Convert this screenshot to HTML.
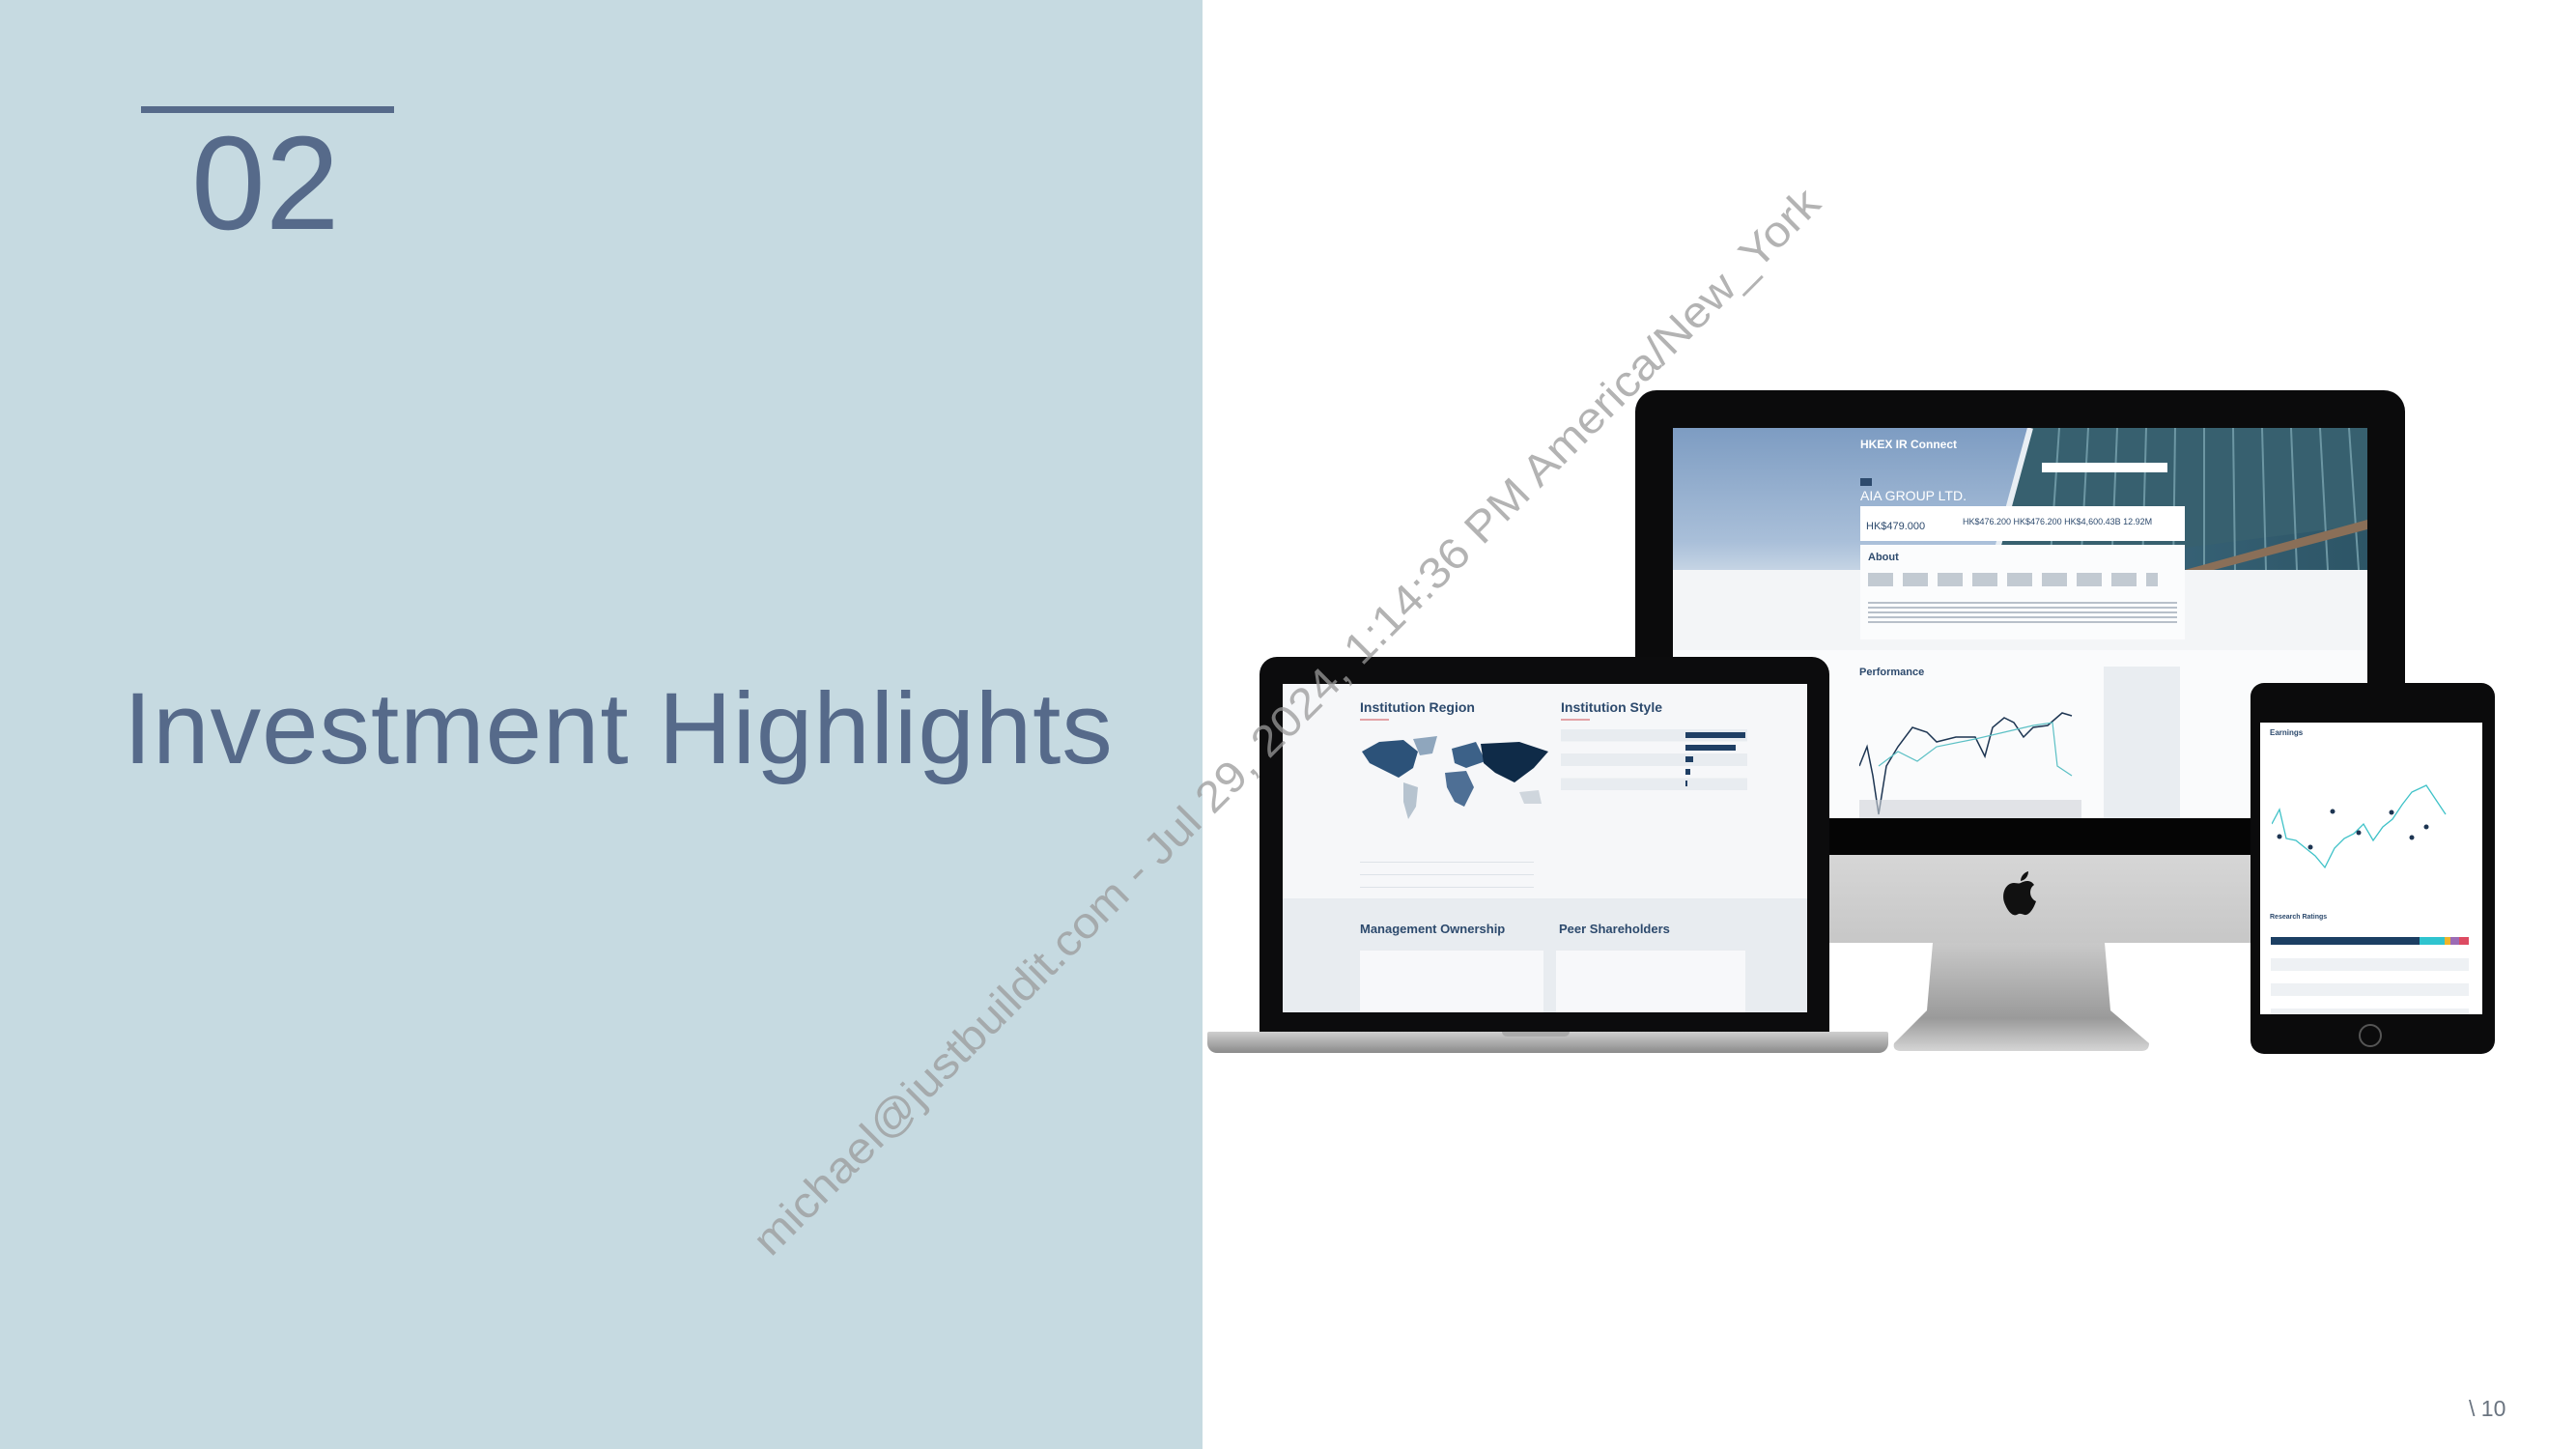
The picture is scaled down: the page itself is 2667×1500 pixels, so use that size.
<!DOCTYPE html>
<html><head><meta charset="utf-8"><style>
*{margin:0;padding:0;box-sizing:border-box}
body{width:2667px;height:1500px;position:relative;background:#fff;overflow:hidden;font-family:"Liberation Sans",sans-serif}
.a{position:absolute}
.t{font-family:"Liberation Sans",sans-serif;color:#2d4a6d;font-weight:bold;white-space:nowrap}
</style></head><body>
<div class="a" style="left:0;top:0;width:1245px;height:1500px;background:#c6dae1"></div>
<div class="a" style="left:146px;top:110px;width:262px;height:7px;background:#566a8a"></div>
<div class="a" style="left:198px;top:120px;font-size:138px;line-height:140px;color:#566a8a">02</div>
<div class="a" style="left:128px;top:690px;font-size:105px;line-height:130px;color:#566a8a;letter-spacing:1px">Investment Highlights</div>
<div class="a" style="left:2556px;top:1445px;font-size:23px;color:#6a7480">\ 10</div>

<!-- iMac -->
<div class="a" style="left:1693px;top:404px;width:797px;height:482px;background:#0b0b0c;border-radius:22px 22px 0 0"></div>
<div class="a" style="left:1732px;top:443px;width:719px;height:404px;background:#f3f5f7;overflow:hidden">
  <div class="a" style="left:0;top:0;width:719px;height:147px;background:linear-gradient(90deg,#8aa6c6,#9db6d2 45%,#3d6a80 52%,#2d5566 100%)"></div>
  <div class="a" style="left:0;top:0;width:370px;height:147px;background:linear-gradient(180deg,#7d9cc2,#a9bfd9 80%,#c5d4e4)"></div>
  <svg class="a" style="left:330px;top:0" width="389" height="147"><polygon points="40,0 389,0 389,100 20,147 0,147" fill="#37606f"/><g stroke="#6c96a3" stroke-width="2">
  <line x1="70" y1="0" x2="60" y2="147"/><line x1="100" y1="0" x2="92" y2="147"/><line x1="130" y1="0" x2="124" y2="147"/><line x1="160" y1="0" x2="156" y2="147"/><line x1="190" y1="0" x2="188" y2="147"/><line x1="220" y1="0" x2="220" y2="147"/><line x1="250" y1="0" x2="252" y2="147"/><line x1="280" y1="0" x2="284" y2="147"/><line x1="310" y1="0" x2="316" y2="147"/><line x1="340" y1="0" x2="348" y2="147"/><line x1="370" y1="0" x2="380" y2="147"/></g>
  <polygon points="200,147 389,95 389,105 230,147" fill="#8a6f58"/><line x1="40" y1="0" x2="0" y2="147" stroke="#e8eef4" stroke-width="6"/></svg>
  <div class="a t" style="left:194px;top:10px;font-size:12px;color:#fff">HKEX IR Connect</div>
  <div class="a" style="left:382px;top:36px;width:130px;height:10px;background:#fff"></div>
  <div class="a" style="left:194px;top:52px;width:12px;height:8px;background:#2d4a6d"></div>
  <div class="a t" style="left:194px;top:62px;font-size:14px;color:#fff;font-weight:normal">AIA GROUP LTD.</div>
  <div class="a" style="left:194px;top:81px;width:336px;height:36px;background:#fff"></div>
  <div class="a t" style="left:200px;top:96px;font-size:11px;font-weight:normal">HK$479.000</div>
  <div class="a t" style="left:300px;top:92px;font-size:9px;font-weight:normal">HK$476.200 HK$476.200 HK$4,600.43B 12.92M</div>
  <div class="a" style="left:194px;top:121px;width:336px;height:98px;background:#fbfcfd"></div>
  <div class="a t" style="left:202px;top:128px;font-size:11px">About</div>
  <div class="a" style="left:202px;top:150px;width:300px;height:14px;background:repeating-linear-gradient(90deg,#8a97a6 0 26px,transparent 26px 36px);opacity:.5"></div>
  <div class="a" style="left:202px;top:180px;width:320px;height:22px;background:repeating-linear-gradient(180deg,#b8c0ca 0 2px,transparent 2px 5px)"></div>
  <div class="a" style="left:0;top:230px;width:719px;height:174px;background:#fafbfc"></div>
  <div class="a t" style="left:193px;top:247px;font-size:11px">Performance</div>
  <svg class="a" style="left:193px;top:290px" width="240" height="114"><path d="M0,60 L8,40 L14,70 L20,110 L28,60 L40,40 L55,20 L70,25 L80,35 L100,30 L120,30 L130,50 L138,20 L150,10 L160,15 L170,30 L180,20 L195,18 L210,5 L220,8" fill="none" stroke="#1d3552" stroke-width="1.5"/><path d="M20,60 L40,45 L60,55 L80,40 L120,32 L150,25 L180,18 L200,15 L205,60 L220,70" fill="none" stroke="#5cc0c5" stroke-width="1.2"/><rect x="0" y="95" width="230" height="19" fill="#d0d4d9" opacity=".6"/></svg>
  <div class="a" style="left:446px;top:247px;width:79px;height:157px;background:#e9edf1"></div>
</div>
<div class="a" style="left:1693px;top:847px;width:797px;height:38px;background:#050505"></div>
<div class="a" style="left:1693px;top:885px;width:797px;height:91px;background:linear-gradient(180deg,#d6d6d6,#c7c7c7)"></div>
<svg class="a" style="left:2072px;top:902px" width="40" height="48" viewBox="0 0 40 48"><path d="M20,12 C24,10 30,8 34,14 C28,18 29,28 36,31 C33,40 28,46 24,45 C21,44 19,43 16,45 C11,47 6,40 3,32 C0,22 5,12 13,12 C16,12 18,13 20,12 Z" fill="#111"/><path d="M20,10 C20,5 24,1 28,0 C28,5 25,9 20,10 Z" fill="#111"/></svg>
<svg class="a" style="left:1955px;top:976px" width="280" height="114"><defs><linearGradient id="g" x1="0" y1="0" x2="0" y2="1"><stop offset="0" stop-color="#c9c9c9"/><stop offset=".7" stop-color="#9a9a9a"/><stop offset="1" stop-color="#d5d5d5"/></linearGradient></defs><path d="M46,0 L224,0 L230,70 L270,104 Q270,112 262,112 L14,112 Q4,112 6,104 L40,70 Z" fill="url(#g)"/></svg>

<!-- Laptop -->
<div class="a" style="left:1304px;top:680px;width:590px;height:390px;background:#0c0c0d;border-radius:18px 18px 0 0"></div>
<div class="a" style="left:1328px;top:708px;width:543px;height:340px;background:#f6f7f9;overflow:hidden">
  <div class="a t" style="left:80px;top:16px;font-size:14px">Institution Region</div>
  <div class="a" style="left:80px;top:36px;width:30px;height:2px;background:#e3a3a6"></div>
  <div class="a t" style="left:288px;top:16px;font-size:14px">Institution Style</div>
  <div class="a" style="left:288px;top:36px;width:30px;height:2px;background:#e3a3a6"></div>
  <svg class="a" style="left:80px;top:52px" width="200" height="90"><path d="M2,18 L20,8 L45,6 L60,18 L55,35 L40,45 L30,40 L10,30 Z" fill="#2c5279"/><path d="M55,5 L80,2 L75,20 L62,22 Z" fill="#8fa6bd"/><path d="M45,50 L60,55 L58,75 L50,88 L45,70 Z" fill="#b6c3cf"/><path d="M88,40 L110,38 L118,55 L108,75 L98,70 L90,55 Z" fill="#4e6f95"/><path d="M95,15 L120,8 L130,28 L110,35 L98,30 Z" fill="#3c6188"/><path d="M125,10 L165,8 L195,18 L180,35 L160,50 L140,40 L128,30 Z" fill="#0f2b48"/><path d="M165,60 L185,58 L188,72 L170,72 Z" fill="#cfd6dd"/></svg>
  <div class="a" style="left:80px;top:174px;width:180px;height:50px;background:repeating-linear-gradient(180deg,transparent 0 10px,#dde2e8 10px 11px,transparent 11px 13px)"></div>
  <div class="a" style="left:288px;top:47px;width:193px;height:63px;background:repeating-linear-gradient(180deg,#e8ecf0 0 12.6px,#f6f7f9 12.6px 25.2px)"></div>
  <div class="a" style="left:417px;top:50px;width:62px;height:6px;background:#1f3f64"></div>
  <div class="a" style="left:417px;top:63px;width:52px;height:6px;background:#1f3f64"></div>
  <div class="a" style="left:417px;top:75px;width:8px;height:6px;background:#1f3f64"></div>
  <div class="a" style="left:417px;top:88px;width:5px;height:6px;background:#1f3f64"></div>
  <div class="a" style="left:417px;top:100px;width:2px;height:6px;background:#1f3f64"></div>
  <div class="a" style="left:0;top:222px;width:543px;height:118px;background:#e8ecf0"></div>
  <div class="a t" style="left:80px;top:246px;font-size:13px">Management Ownership</div>
  <div class="a t" style="left:286px;top:246px;font-size:13px">Peer Shareholders</div>
  <div class="a" style="left:80px;top:276px;width:190px;height:64px;background:#f7f8fa"></div>
  <div class="a" style="left:283px;top:276px;width:196px;height:64px;background:#f7f8fa"></div>
</div>
<div class="a" style="left:1250px;top:1068px;width:705px;height:22px;background:linear-gradient(180deg,#cfcfcf,#8a8a8a);border-radius:2px 2px 10px 10px"></div>
<div class="a" style="left:1555px;top:1068px;width:70px;height:5px;background:#aaa;border-radius:0 0 6px 6px"></div>

<!-- Tablet -->
<div class="a" style="left:2330px;top:707px;width:253px;height:384px;background:#0b0b0c;border-radius:14px"></div>
<div class="a" style="left:2340px;top:748px;width:230px;height:302px;background:#fff;overflow:hidden">
  <div class="a t" style="left:10px;top:6px;font-size:8px">Earnings</div>
  <svg class="a" style="left:12px;top:50px" width="190" height="110"><path d="M0,55 L8,40 L15,70 L25,72 L35,80 L45,88 L55,100 L65,80 L75,70 L85,65 L95,55 L105,72 L115,58 L125,50 L135,35 L145,22 L160,15 L170,30 L180,45" fill="none" stroke="#3fc2c8" stroke-width="1.3"/><g fill="#1d3552"><circle cx="8" cy="68" r="2.5"/><circle cx="40" cy="79" r="2.5"/><circle cx="63" cy="42" r="2.5"/><circle cx="90" cy="64" r="2.5"/><circle cx="124" cy="43" r="2.5"/><circle cx="145" cy="69" r="2.5"/><circle cx="160" cy="58" r="2.5"/></g></svg>
  <div class="a t" style="left:10px;top:198px;font-size:7px">Research Ratings</div>
  <div class="a" style="left:11px;top:222px;width:154px;height:8px;background:#1c3f63"></div>
  <div class="a" style="left:165px;top:222px;width:26px;height:8px;background:#2fc4cf"></div>
  <div class="a" style="left:191px;top:222px;width:6px;height:8px;background:#f0b429"></div>
  <div class="a" style="left:197px;top:222px;width:9px;height:8px;background:#9c6bb5"></div>
  <div class="a" style="left:206px;top:222px;width:10px;height:8px;background:#dd4b62"></div>
  <div class="a" style="left:11px;top:244px;width:205px;height:58px;background:repeating-linear-gradient(180deg,#eef1f4 0 13px,#fff 13px 26px)"></div>
</div>
<div class="a" style="left:2442px;top:1060px;width:24px;height:24px;border:2px solid #555;border-radius:50%"></div>

<!-- watermark -->
<svg class="a" style="left:0;top:0" width="2667" height="1500"><text x="1332" y="762" transform="rotate(-45 1332 747)" text-anchor="middle" font-family="Liberation Sans, sans-serif" font-size="45" fill="#9a9a9a" fill-opacity="0.75" textLength="1540" lengthAdjust="spacingAndGlyphs">michael@justbuildit.com - Jul 29, 2024, 1:14:36 PM America/New_York</text></svg>
</body></html>
